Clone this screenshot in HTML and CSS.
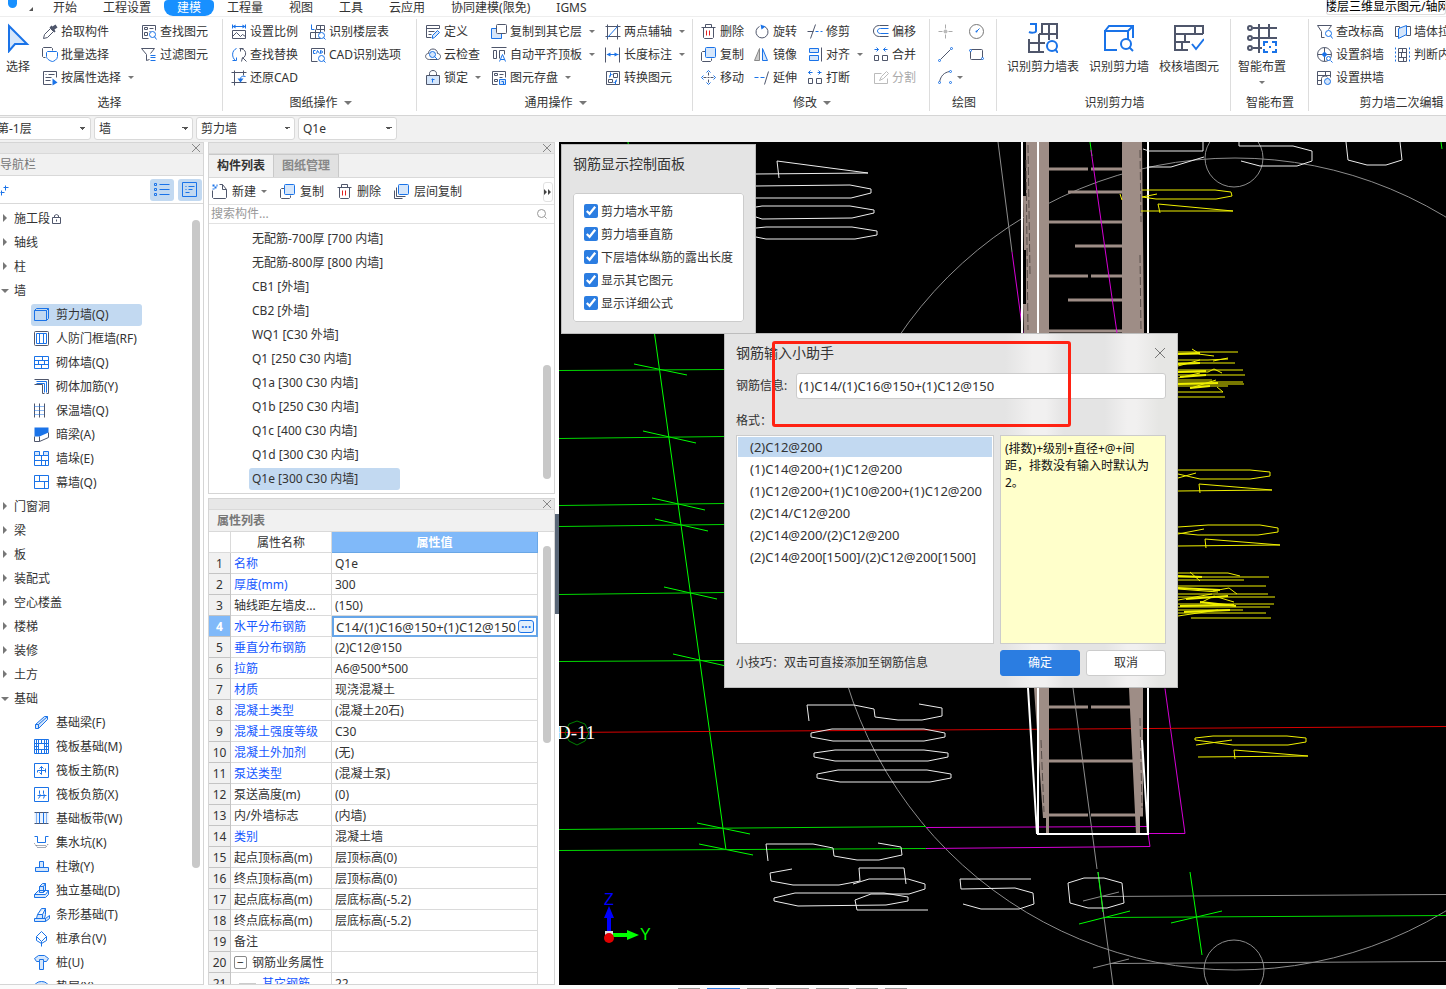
FILE: index.html
```html
<!DOCTYPE html>
<html lang="zh-CN">
<head>
    <meta charset="utf-8">
    <title>建模</title>
    <link rel="stylesheet" href="styles.css">
</head>
<body>
    <!-- 图标库 -->
    <svg class="icon-lib" aria-hidden="true">
        <symbol id="i-cursor" viewBox="0 0 30 30"><path d="M6 3v25l6-7h12z" fill="#d5e6fb" stroke="#1a73e8" stroke-width="2"/></symbol>
        <symbol id="i-pick" viewBox="-.5 -.5 16 16"><path class="d" d="M1 14l1-4 6-6 3 3-6 6z"/><path d="M7 3l5 5 1-1-1-2 3-2-2-3-3 2-1-1z" fill="#4f566b"/></symbol>
        <symbol id="i-batch" viewBox="-.5 -.5 16 16"><path class="d" d="M3 10H1L0 9V1l1-1h8l1 1v2"/><path class="b" d="M4 5l1-1h9l1 1v4c0 3-4 5-5 5s-6-2-6-5z"/></symbol>
        <symbol id="i-attr" viewBox="-.5 -.5 16 16"><path class="d" d="M9 14H1V1h13v6M3 4h1M6 4h6M3 7h6M3 10h5"/><path class="bf" d="M10 8v7l5-3z"/></symbol>
        <symbol id="i-find" viewBox="-.5 -.5 16 16"><path class="d" d="M7 14H1V1h13v5M3 3h3v2H3zM8 4h4M3 8h3v3H3zM8 7h1"/><circle class="b" cx="11" cy="10" r="3"/><path class="b" d="M13 12l2 3"/></symbol>
        <symbol id="i-filter" viewBox="-.5 -.5 16 16"><path class="d" d="M8 12l-3 1V7L0 1h13L9 6"/><path class="b" d="M9 8h5M9 10h5M9 13h5"/></symbol>
        <symbol id="i-scale" viewBox="-.5 -.5 16 16"><path class="b" d="M1 0v4M14 0v4M1 2h13"/><path class="bf" d="M1 2l3-2v4zM14 2l-3-2v4z"/><path class="d" d="M1 6h13v8H1zM1 12l4-4 4 4 2-2 3 2"/></symbol>
        <symbol id="i-replace" viewBox="-.5 -.5 16 16"><path class="b" d="M5 1C0 3 0 10 4 13M1 13h4v-3"/><path class="d" d="M8 1c7 0 8 7 3 10M9 4V1h3M10 14l1-4 4 4"/></symbol>
        <symbol id="i-restore" viewBox="-.5 -.5 16 16"><path class="d" d="M3 0v15M12 0v5M0 2h15M0 12h15"/><path class="b" d="M14 6c-5-1-5 1-5 4"/><path class="bf" d="M6 8h6l-3 4z"/></symbol>
        <symbol id="i-floor" viewBox="-.5 -.5 16 16"><path class="b" d="M1 0v5h3"/><path class="d" d="M6 5V1h8v6M6 5h8M10 1v13M0 14V8h10M5 5v9M0 14h10"/><circle class="bw" cx="11" cy="11" r="3"/><path class="b" d="M13 13l2 2"/></symbol>
        <symbol id="i-cad" viewBox="-.5 -.5 16 16"><path class="d" d="M7 14H1V1h13v6"/><path class="b" d="M5 3H3v3h2M6 6l1-3 2 3M10 3v3l2-1V4z"/><circle class="b" cx="11" cy="11" r="3"/><path class="b" d="M13 13l2 2"/></symbol>
        <symbol id="i-define" viewBox="-.5 -.5 16 16"><path class="d" d="M6 13H1V1h13v3M1 4h13M3 7h6M3 10h3"/><path class="bl" d="M7 14v-3l5-5 2 2-5 5z"/></symbol>
        <symbol id="i-cloud" viewBox="-.5 -.5 16 16"><path class="d" d="M4 12c-5 0-5-6-1-6 0-6 9-6 9 0 4 0 4 6 0 6z"/><circle class="bl" cx="7" cy="7" r="3"/><path class="b" d="M9 9l3 3"/></symbol>
        <symbol id="i-lock" viewBox="-.5 -.5 16 16"><path class="d" d="M4 5V3c0-4 7-4 7 0v2"/><path d="M1 5h13v9H1z" fill="#d5e6fb" stroke="#4f566b"/><path class="b" d="M7 8v4M6 9h3"/></symbol>
        <symbol id="i-copyto" viewBox="-.5 -.5 16 16"><path class="bl" d="M0 4h10v10H0z"/><rect x="5" y="0" width="10" height="9" rx="1" fill="#fff" stroke="#4f566b"/></symbol>
        <symbol id="i-align-top" viewBox="-.5 -.5 16 16"><path class="d" d="M0 0h15M2 3h3v8H2zM8 11V3h5v4"/><path class="b" d="M8 14l3-7 3 7M9 12h4"/></symbol>
        <symbol id="i-save" viewBox="-.5 -.5 16 16"><path class="d" d="M6 14H1V1h13v6M3 3h3v2H3zM8 4h4M3 9h3v2H3zM8 7h3"/><path class="bl" d="M8 9h6v5H8zM10 11h2v3"/></symbol>
        <symbol id="i-axis" viewBox="-.5 -.5 16 16"><path class="d" d="M2 0v15M12 0v15M0 2h15M0 12h15"/><path class="b" d="M2 13L12 2"/></symbol>
        <symbol id="i-length" viewBox="-.5 -.5 16 16"><path class="d" d="M0 0v15M14 0v15"/><path class="b" d="M2 7h11"/><path class="bf" d="M1 7l4-2v4zM13 7l-4-2v4z"/></symbol>
        <symbol id="i-convert" viewBox="-.5 -.5 16 16"><path class="d" d="M1 1h13v13H1zM8 3h4v4H8zM3 9h4v3H3z"/><path class="b" d="M4 7c0-3 1-3 3-3M11 9c0 3-1 3-3 3M5 2v4M10 10v4"/></symbol>
        <symbol id="i-del" viewBox="-.5 -.5 16 16"><path class="d" d="M0 3h14M4 3V0h6v3M2 3v10l1 1h8l1-1V3"/><path d="M5 6v5M8 6v5" stroke="#e02020" fill="none"/></symbol>
        <symbol id="i-copy" viewBox="-.5 -.5 16 16"><path class="d" d="M4 4H1L0 5v8l1 1h8l1-1v-2"/><rect class="bl" x="4" y="0" width="10" height="10" rx="1"/></symbol>
        <symbol id="i-copy2" viewBox="-.5 -.5 16 16"><path class="d" d="M2 3v9h9M0 6v8h8"/><rect class="bl" x="4" y="0" width="10" height="10" rx="1"/></symbol>
        <symbol id="i-move" viewBox="-.5 -.5 16 16"><path class="b" d="M5 2l2-2 2 2M5 12l2 2 2-2M2 5L0 7l2 2M12 5l2 2-2 2"/><path class="d" d="M7 2v3M7 9v3M2 7h3M9 7h3M6 7h2"/></symbol>
        <symbol id="i-rotate" viewBox="-.5 -.5 16 16"><path class="d" d="M10 2a6 6 0 1 1-5 0"/><path class="bf" d="M6 0l5 2-4 3z"/></symbol>
        <symbol id="i-mirror" viewBox="-.5 -.5 16 16"><path d="M5 1v12H0z" fill="#ccc" stroke="#888"/><path class="bl" d="M8 1v12h5z"/></symbol>
        <symbol id="i-extend" viewBox="-.5 -.5 16 16"><path class="b" d="M0 7h4M6 7h4"/><path class="d" d="M10 14l4-13"/></symbol>
        <symbol id="i-trim" viewBox="-.5 -.5 16 16"><path class="d" d="M3 14L8 0M0 7h6"/><path class="b" d="M8 7h3M13 7h2"/></symbol>
        <symbol id="i-align" viewBox="-.5 -.5 16 16"><path class="bl" d="M2 1h9v4H2zM2 8h9v5H2z"/><path class="d" d="M14 0v14"/></symbol>
        <symbol id="i-break" viewBox="-.5 -.5 16 16"><path class="d" d="M1 8h4v5H1zM9 8h5v5H9z"/><path class="b" d="M3 0L1 2l2 2M11 0l2 2-2 2M1 2h4M10 2h4"/></symbol>
        <symbol id="i-merge" viewBox="-.5 -.5 16 16"><path class="d" d="M1 8h4v5H1zM9 8h5v5H9z"/><path class="b" d="M3 0l2 2-2 2M12 0l-2 2 2 2M1 2h4M10 2h4"/></symbol>
        <symbol id="i-offset" viewBox="-.5 -.5 16 16"><path class="d" d="M15 1H6C-2 1-2 12 6 12h9"/><path class="b" d="M15 4H7C3 4 3 9 7 9h8"/></symbol>
        <symbol id="i-split" viewBox="-.5 -.5 16 16"><path d="M8 3H1v10h13V8M6 10l2-4 5-5 2 2-5 5z" fill="none" stroke="#bbb"/></symbol>
        <symbol id="i-point" viewBox="-.5 -.5 16 16"><path d="M7 0v4M7 10v4M0 7h4M10 7h4" stroke="#aaa"/><circle cx="7" cy="7" r="2" fill="#bbb"/></symbol>
        <symbol id="i-line" viewBox="-.5 -.5 16 16"><path class="d" d="M2 12L12 2"/><circle class="bw" cx="1" cy="13" r="1"/><circle class="bw" cx="13" cy="1" r="1"/></symbol>
        <symbol id="i-arc" viewBox="-.5 -.5 16 16"><path class="d" d="M1 12C2 5 6 2 11 1"/><circle class="bw" cx="1" cy="12" r="1"/><circle class="bw" cx="12" cy="1" r="1"/><circle class="bw" cx="12" cy="12" r="1"/></symbol>
        <symbol id="i-circle" viewBox="-.5 -.5 16 16"><circle cx="7" cy="7" r="7" fill="none" stroke="#777"/><path class="b" d="M7 7l3-3"/><circle class="bf" cx="7" cy="7" r="1"/></symbol>
        <symbol id="i-rect" viewBox="-.5 -.5 16 16"><rect class="d" x="1" y="2" width="12" height="10" rx="1"/><circle class="bw" cx="1" cy="3" r="1"/><circle class="bw" cx="13" cy="11" r="1"/></symbol>
        <symbol id="i-walltable" viewBox="0 0 30 30"><path class="b2" d="M2 1h6v7c0 2-5 2-7 1"/><path class="d2" d="M14 11V1h15v15M14 11h15M21 1v16M11 11h3M11 11v18M1 16v13h15M1 20h16"/><circle class="b2" cx="24" cy="23" r="5"/><path class="b2" d="M27 26l3 4"/></symbol>
        <symbol id="i-wallfind" viewBox="0 0 30 30"><path class="b2" d="M13 27H1V8h23v8M1 8l4-5h24v12M24 8l5-5"/><circle class="b2" cx="22" cy="21" r="5"/><path class="b2" d="M25 24l4 4"/></symbol>
        <symbol id="i-wallcheck" viewBox="0 0 30 30"><path class="d2" d="M14 27H1V3h28v8M1 11h28M21 3v8M11 11v8M1 19h15M8 19v8"/><path class="b2" d="M18 21l4 5 8-10"/></symbol>
        <symbol id="i-smart" viewBox="0 0 30 30"><path class="d2" d="M12 1v29M22 1v14M6 5h24M6 15h24M6 25h9"/><circle class="d2" cx="3" cy="5" r="2"/><circle class="d2" cx="3" cy="15" r="2"/><circle class="d2" cx="3" cy="25" r="2"/><path class="b2" d="M17 23v-4h4M25 19h4v4M29 26v3h-4M21 29h-4v-3M22 24h2"/></symbol>
        <symbol id="i-elev" viewBox="-.5 -.5 16 16"><path class="d" d="M7 13H4V7L0 1h14l-3 4"/><circle class="b" cx="11" cy="9" r="3"/><path class="b" d="M13 11l2 3"/></symbol>
        <symbol id="i-slope" viewBox="-.5 -.5 16 16"><circle class="d" cx="7" cy="7" r="7"/><path class="d" d="M7 0v14M0 7h14"/><path class="bf" d="M4 7l3-3 3 3-3 3z"/><circle class="bw" cx="11" cy="11" r="2"/><path class="b" d="M13 13l2 2"/></symbol>
        <symbol id="i-arch" viewBox="-.5 -.5 16 16"><path class="d" d="M0 14V1h13v6M0 5h13M4 14V8c0-3 6-3 6-1M0 10h4M8 1v4M0 14h4"/><circle class="bl" cx="10" cy="11" r="3"/></symbol>
        <symbol id="i-pull" viewBox="-.5 -.5 16 16"><path class="d" d="M0 2h4v10H0zM11 2h4v9h-4z"/><path class="bl" d="M3 4l8-3v9l-8 4z"/></symbol>
        <symbol id="i-judge" viewBox="-.5 -.5 16 16"><path class="d" d="M3 1h8v13H3zM3 5h8M3 10h8M7 1v4M6 5v5M8 10v4"/><path class="b" stroke-dasharray="2" d="M0 0v15M14 0v15"/></symbol>
        <symbol id="i-new" viewBox="-.5 -.5 16 16"><path class="d" d="M0 6v7l1 1h12l1-1V5l-4-5H7M10 0v5h4"/><path class="bf" d="M0 0h2v2H0zM2 2h2v2H2zM4 0h1v2H4zM0 4h2v1H0z"/></symbol>
        <symbol id="i-search" viewBox="-.5 -.5 16 16"><circle cx="7" cy="7" r="4" fill="none" stroke="#999"/><path d="M10 10l2 2" stroke="#999"/></symbol>

        <symbol id="n-wall" viewBox="-.5 -.5 16 16"><path class="b" d="M0 3h12v10H0zM0 3l2-2h12v10l-2 2M12 3l2-2"/></symbol>
        <symbol id="n-door" viewBox="-.5 -.5 16 16"><rect class="d" x="0" y="0" width="14" height="14" rx="1"/><path class="b" d="M2 2h10v10H2zM5 2v10M9 2v10"/></symbol>
        <symbol id="n-brick" viewBox="-.5 -.5 16 16"><path class="b" d="M0 1h14v12H0zM0 5h14M0 9h14M8 1v4M4 5v4M10 5v4M7 9v4"/></symbol>
        <symbol id="n-rebar" viewBox="-.5 -.5 16 16"><path class="d" d="M0 0h14v14M0 5h8v9M12 14h2M8 14h2"/><path class="b" d="M2 2h10v11M2 4h8v9"/></symbol>
        <symbol id="n-insul" viewBox="-.5 -.5 16 16"><path class="d" d="M0 0v14M5 0v14M10 0v14"/><path class="b" stroke-dasharray="1 1" d="M0 3h10M0 7h10M0 11h10"/></symbol>
        <symbol id="n-dark" viewBox="-.5 -.5 16 16"><path class="bf" d="M0 0h14v5l-9 4H0z"/><path class="d" d="M0 9v5h5l9-4V5M5 9v5"/></symbol>
        <symbol id="n-pier" viewBox="-.5 -.5 16 16"><path class="b" d="M0 4h14v10H0zM0 9h14M7 4v10M11 9v5"/><path class="bl" d="M0 0h5v4H0zM9 0h5v4H9z"/></symbol>
        <symbol id="n-curtain" viewBox="-.5 -.5 16 16"><path class="b" d="M0 0h14v13H0zM0 6h14M5 0v6M10 6v7"/></symbol>
        <symbol id="n-beam" viewBox="-.5 -.5 16 16"><path class="bl" d="M1 9l9-8h3v3l-9 9H1zM1 9h3v4M4 9l9-8"/></symbol>
        <symbol id="n-raft" viewBox="-.5 -.5 16 16"><path class="b" d="M0 0h14v14H0zM0 4h14M0 10h14M4 0v14M10 0v14M7 0v4M7 10v4M0 7h4M10 7h4M2 0v14M12 0v14"/></symbol>
        <symbol id="n-main" viewBox="-.5 -.5 16 16"><path class="b" d="M0 0h14v14H0zM3 7h8M7 3v8M5 5l2-2 2 2M5 9l2 2M11 5v4M3 7v2"/></symbol>
        <symbol id="n-neg" viewBox="-.5 -.5 16 16"><path class="b" d="M0 0h14v14H0zM3 8h9M5 3v3l1 2-2 3M9 3v3l1 2-1 3"/></symbol>
        <symbol id="n-band" viewBox="-.5 -.5 16 16"><path d="M0 1h14v10H0z" fill="#e8f1fd"/><path class="d" d="M0 1h14M0 12h14"/><path class="b" d="M5 1v11M9 1v11"/><path class="b" stroke-dasharray="1 1" d="M2 1v11M12 1v11"/></symbol>
        <symbol id="n-pit" viewBox="-.5 -.5 16 16"><path class="b" d="M0 1h3v6h8V1h3"/><path class="d" stroke-dasharray="1 1" d="M0 8l3 4h8l3-4M2 10h10"/></symbol>
        <symbol id="n-pedestal" viewBox="-.5 -.5 16 16"><path class="bl" d="M5 2h4v6H5zM1 8h13v4H1z"/></symbol>
        <symbol id="n-iso" viewBox="-.5 -.5 16 16"><path class="bl" d="M0 11l4-4h10l-3 4zM0 11v3h11l3-3V7M5 9V3l3-3h3v7l-2 2zM5 3h4v6M9 3l2-3"/></symbol>
        <symbol id="n-strip" viewBox="-.5 -.5 16 16"><path class="bl" d="M0 11h11v3H0zM11 11l4-3v3l-4 3M2 11l1-4 4-6h4v6l-1 4M3 7h5l3-6M8 7v4"/></symbol>
        <symbol id="n-cap" viewBox="-.5 -.5 16 16"><path class="b" d="M2 5l5-5 5 5-5 5zM2 5v4l5 3 5-3V5M7 10v5"/></symbol>
        <symbol id="n-pile" viewBox="-.5 -.5 16 16"><path class="bl" d="M0 3l4-3h6l4 3-2 3H9v8H5V6H2zM5 6V4h4v2"/></symbol>
        <symbol id="n-pad" viewBox="-.5 -.5 16 16"><ellipse class="bl" cx="7" cy="7" rx="7" ry="5"/></symbol>
    </svg>

    <header class="menubar">
        <span class="logo"></span><span class="logo-arrow"></span>
        <nav class="tabs">
            <a href="#">开始</a>
            <a href="#">工程设置</a>
            <a href="#" class="active">建模</a>
            <a href="#">工程量</a>
            <a href="#">视图</a>
            <a href="#">工具</a>
            <a href="#">云应用</a>
            <a href="#">协同建模(限免)</a>
            <a href="#">IGMS</a>
        </nav>
        <div class="tooltip">楼层三维显示图元/轴网</div>
    </header>

    <div class="ribbon">
        <section class="group g-select">
            <div class="tools">
                <button class="big"><svg><use href="#i-cursor"/></svg>选择</button>
                <div class="col">
                    <button><svg><use href="#i-pick"/></svg>拾取构件</button>
                    <button><svg><use href="#i-batch"/></svg>批量选择</button>
                    <button><svg><use href="#i-attr"/></svg>按属性选择<i class="arrow"></i></button>
                </div>
                <div class="col">
                    <button><svg><use href="#i-find"/></svg>查找图元</button>
                    <button><svg><use href="#i-filter"/></svg>过滤图元</button>
                </div>
            </div>
            <div class="group-name">选择</div>
        </section>
        <section class="group g-drawing">
            <div class="tools">
                <div class="col">
                    <button><svg><use href="#i-scale"/></svg>设置比例</button>
                    <button><svg><use href="#i-replace"/></svg>查找替换</button>
                    <button><svg><use href="#i-restore"/></svg>还原CAD</button>
                </div>
                <div class="col">
                    <button><svg><use href="#i-floor"/></svg>识别楼层表</button>
                    <button><svg><use href="#i-cad"/></svg>CAD识别选项</button>
                </div>
            </div>
            <div class="group-name">图纸操作<i class="arrow wide"></i></div>
        </section>
        <section class="group g-common">
            <div class="tools">
                <div class="col">
                    <button><svg><use href="#i-define"/></svg>定义</button>
                    <button><svg><use href="#i-cloud"/></svg>云检查</button>
                    <button><svg><use href="#i-lock"/></svg>锁定<i class="arrow"></i></button>
                </div>
                <div class="col">
                    <button><svg><use href="#i-copyto"/></svg>复制到其它层<i class="arrow"></i></button>
                    <button><svg><use href="#i-align-top"/></svg>自动平齐顶板<i class="arrow"></i></button>
                    <button><svg><use href="#i-save"/></svg>图元存盘<i class="arrow"></i></button>
                </div>
                <div class="col">
                    <button><svg><use href="#i-axis"/></svg>两点辅轴<i class="arrow"></i></button>
                    <button><svg><use href="#i-length"/></svg>长度标注<i class="arrow"></i></button>
                    <button><svg><use href="#i-convert"/></svg>转换图元</button>
                </div>
            </div>
            <div class="group-name">通用操作<i class="arrow wide"></i></div>
        </section>
        <section class="group g-modify">
            <div class="tools">
                <div class="col">
                    <button><svg><use href="#i-del"/></svg>删除</button>
                    <button><svg><use href="#i-copy"/></svg>复制</button>
                    <button><svg><use href="#i-move"/></svg>移动</button>
                </div>
                <div class="col">
                    <button><svg><use href="#i-rotate"/></svg>旋转</button>
                    <button><svg><use href="#i-mirror"/></svg>镜像</button>
                    <button><svg><use href="#i-extend"/></svg>延伸</button>
                </div>
                <div class="col">
                    <button><svg><use href="#i-trim"/></svg>修剪</button>
                    <button><svg><use href="#i-align"/></svg>对齐<i class="arrow"></i></button>
                    <button><svg><use href="#i-break"/></svg>打断</button>
                </div>
                <div class="col">
                    <button><svg><use href="#i-offset"/></svg>偏移</button>
                    <button><svg><use href="#i-merge"/></svg>合并</button>
                    <button disabled><svg><use href="#i-split"/></svg>分割</button>
                </div>
            </div>
            <div class="group-name">修改<i class="arrow wide"></i></div>
        </section>
        <section class="group g-draw">
            <div class="tools">
                <div class="col">
                    <button aria-label="点"><svg><use href="#i-point"/></svg></button>
                    <button aria-label="直线"><svg><use href="#i-line"/></svg></button>
                    <button aria-label="弧"><svg><use href="#i-arc"/></svg><i class="arrow near"></i></button>
                </div>
                <div class="col">
                    <button aria-label="圆"><svg><use href="#i-circle"/></svg></button>
                    <button aria-label="矩形"><svg><use href="#i-rect"/></svg></button>
                </div>
            </div>
            <div class="group-name">绘图</div>
        </section>
        <section class="group g-identify">
            <div class="tools">
                <button class="big"><svg><use href="#i-walltable"/></svg>识别剪力墙表</button>
                <button class="big"><svg><use href="#i-wallfind"/></svg>识别剪力墙</button>
                <button class="big"><svg><use href="#i-wallcheck"/></svg>校核墙图元</button>
            </div>
            <div class="group-name">识别剪力墙</div>
        </section>
        <section class="group g-smart">
            <div class="tools">
                <button class="big"><svg><use href="#i-smart"/></svg>智能布置<i class="arrow"></i></button>
            </div>
            <div class="group-name">智能布置</div>
        </section>
        <section class="group g-edit">
            <div class="tools">
                <div class="col">
                    <button><svg><use href="#i-elev"/></svg>查改标高</button>
                    <button><svg><use href="#i-slope"/></svg>设置斜墙</button>
                    <button><svg><use href="#i-arch"/></svg>设置拱墙</button>
                </div>
                <div class="col">
                    <button><svg><use href="#i-pull"/></svg>墙体拉伸</button>
                    <button><svg><use href="#i-judge"/></svg>判断内外墙</button>
                </div>
            </div>
            <div class="group-name">剪力墙二次编辑</div>
        </section>
    </div>

    <div class="combos">
        <select aria-label="楼层"><option>第-1层</option></select>
        <select aria-label="类别"><option>墙</option></select>
        <select aria-label="构件类型"><option>剪力墙</option></select>
        <select aria-label="构件"><option>Q1e</option></select>
    </div>

    <main class="workspace">
        <aside class="panel nav-panel">
            <div class="grip"><button class="close" aria-label="关闭"><svg viewBox="0 0 8 8"><path d="M0 0l8 8M8 0L0 8"/></svg></button></div>
            <div class="panel-title nav-title">导航栏</div>
            <div class="nav-tools">
                <svg class="plus" viewBox="-.5 -.5 10 12"><path class="b" d="M0 8h4M1 6v5M3 3h5M5 1v5"/></svg>
                <button aria-label="列表"><svg viewBox="-.5 -.5 16 16"><path class="b" d="M5 2h10M5 7h10M5 12h10M0 1h2v2H0zM0 6h2v2H0zM0 11h2v2H0z"/></svg></button>
                <button aria-label="详情"><svg viewBox="-.5 -.5 16 16"><path class="b" d="M0 0h14v14H0zM3 4h1M6 4h6M3 7h1M6 7h4M3 10h4"/></svg></button>
            </div>
            <div class="nav-body">
                <ul class="tree">
                    <li><a href="#" class="closed">施工段<svg class="tiny" viewBox="-.5 -.5 10 12"><path class="d" d="M0 4h8v6H0zM2 4V2l2-1 2 1v2M4 6v2"/></svg></a></li>
                    <li><a href="#" class="closed">轴线</a></li>
                    <li><a href="#" class="closed">柱</a></li>
                    <li><a href="#" class="open">墙</a>
                        <ul>
                            <li><a href="#" class="selected"><svg><use href="#n-wall"/></svg>剪力墙(Q)</a></li>
                            <li><a href="#"><svg><use href="#n-door"/></svg>人防门框墙(RF)</a></li>
                            <li><a href="#"><svg><use href="#n-brick"/></svg>砌体墙(Q)</a></li>
                            <li><a href="#"><svg><use href="#n-rebar"/></svg>砌体加筋(Y)</a></li>
                            <li><a href="#"><svg><use href="#n-insul"/></svg>保温墙(Q)</a></li>
                            <li><a href="#"><svg><use href="#n-dark"/></svg>暗梁(A)</a></li>
                            <li><a href="#"><svg><use href="#n-pier"/></svg>墙垛(E)</a></li>
                            <li><a href="#"><svg><use href="#n-curtain"/></svg>幕墙(Q)</a></li>
                        </ul>
                    </li>
                    <li><a href="#" class="closed">门窗洞</a></li>
                    <li><a href="#" class="closed">梁</a></li>
                    <li><a href="#" class="closed">板</a></li>
                    <li><a href="#" class="closed">装配式</a></li>
                    <li><a href="#" class="closed">空心楼盖</a></li>
                    <li><a href="#" class="closed">楼梯</a></li>
                    <li><a href="#" class="closed">装修</a></li>
                    <li><a href="#" class="closed">土方</a></li>
                    <li><a href="#" class="open">基础</a>
                        <ul>
                            <li><a href="#"><svg><use href="#n-beam"/></svg>基础梁(F)</a></li>
                            <li><a href="#"><svg><use href="#n-raft"/></svg>筏板基础(M)</a></li>
                            <li><a href="#"><svg><use href="#n-main"/></svg>筏板主筋(R)</a></li>
                            <li><a href="#"><svg><use href="#n-neg"/></svg>筏板负筋(X)</a></li>
                            <li><a href="#"><svg><use href="#n-band"/></svg>基础板带(W)</a></li>
                            <li><a href="#"><svg><use href="#n-pit"/></svg>集水坑(K)</a></li>
                            <li><a href="#"><svg><use href="#n-pedestal"/></svg>柱墩(Y)</a></li>
                            <li><a href="#"><svg><use href="#n-iso"/></svg>独立基础(D)</a></li>
                            <li><a href="#"><svg><use href="#n-strip"/></svg>条形基础(T)</a></li>
                            <li><a href="#"><svg><use href="#n-cap"/></svg>桩承台(V)</a></li>
                            <li><a href="#"><svg><use href="#n-pile"/></svg>桩(U)</a></li>
                            <li><a href="#"><svg><use href="#n-pad"/></svg>垫层(X)</a></li>
                        </ul>
                    </li>
                </ul>
                <span class="thumb"></span>
            </div>
        </aside>

        <div class="middle">
            <section class="panel list-panel">
                <div class="grip"><button class="close" aria-label="关闭"><svg viewBox="0 0 8 8"><path d="M0 0l8 8M8 0L0 8"/></svg></button></div>
                <div class="panel-tabs">
                    <button class="active">构件列表</button>
                    <button>图纸管理</button>
                </div>
                <div class="list-tools">
                    <button><svg><use href="#i-new"/></svg>新建<i class="arrow"></i></button>
                    <button><svg><use href="#i-copy"/></svg>复制</button>
                    <button><svg><use href="#i-del"/></svg>删除</button>
                    <button><svg><use href="#i-copy2"/></svg>层间复制</button>
                    <button class="more" aria-label="更多"><svg viewBox="0 0 8 6"><path d="M0 0v6l3-3zM4 0v6l3-3z" fill="#444"/></svg></button>
                </div>
                <div class="search">
                    <input type="text" placeholder="搜索构件..." aria-label="搜索构件">
                    <svg><use href="#i-search"/></svg>
                </div>
                <div class="list-body">
                    <ul>
                        <li>无配筋-700厚 [700 内墙]</li>
                        <li>无配筋-800厚 [800 内墙]</li>
                        <li>CB1 [外墙]</li>
                        <li>CB2 [外墙]</li>
                        <li>WQ1 [C30 外墙]</li>
                        <li>Q1 [250 C30 内墙]</li>
                        <li>Q1a [300 C30 内墙]</li>
                        <li>Q1b [250 C30 内墙]</li>
                        <li>Q1c [400 C30 内墙]</li>
                        <li>Q1d [300 C30 内墙]</li>
                        <li class="selected">Q1e [300 C30 内墙]</li>
                    </ul>
                    <span class="thumb"></span>
                </div>
            </section>

            <section class="panel prop-panel">
                <div class="grip"><button class="close" aria-label="关闭"><svg viewBox="0 0 8 8"><path d="M0 0l8 8M8 0L0 8"/></svg></button></div>
                <div class="panel-title"><b>属性列表</b></div>
                <div class="prop-body">
                    <table>
                        <thead><tr><th class="no"></th><th class="name">属性名称</th><th class="value">属性值</th></tr></thead>
                        <tbody>
                            <tr><td>1</td><td class="link">名称</td><td>Q1e</td></tr>
                            <tr><td>2</td><td class="link">厚度(mm)</td><td>300</td></tr>
                            <tr><td>3</td><td>轴线距左墙皮...</td><td>(150)</td></tr>
                            <tr class="editing"><td>4</td><td class="link">水平分布钢筋</td><td><div class="edit"><input class="rebar" type="text" value="C14/(1)C16@150+(1)C12@150" aria-label="水平分布钢筋"><button aria-label="更多">···</button></div></td></tr>
                            <tr><td>5</td><td class="link">垂直分布钢筋</td><td>(2)C12@150</td></tr>
                            <tr><td>6</td><td class="link">拉筋</td><td>A6@500*500</td></tr>
                            <tr><td>7</td><td class="link">材质</td><td>现浇混凝土</td></tr>
                            <tr><td>8</td><td class="link">混凝土类型</td><td>(混凝土20石)</td></tr>
                            <tr><td>9</td><td class="link">混凝土强度等级</td><td>C30</td></tr>
                            <tr><td>10</td><td class="link">混凝土外加剂</td><td>(无)</td></tr>
                            <tr><td>11</td><td class="link">泵送类型</td><td>(混凝土泵)</td></tr>
                            <tr><td>12</td><td>泵送高度(m)</td><td>(0)</td></tr>
                            <tr><td>13</td><td>内/外墙标志</td><td>(内墙)</td></tr>
                            <tr><td>14</td><td class="link">类别</td><td>混凝土墙</td></tr>
                            <tr><td>15</td><td>起点顶标高(m)</td><td>层顶标高(0)</td></tr>
                            <tr><td>16</td><td>终点顶标高(m)</td><td>层顶标高(0)</td></tr>
                            <tr><td>17</td><td>起点底标高(m)</td><td>层底标高(-5.2)</td></tr>
                            <tr><td>18</td><td>终点底标高(m)</td><td>层底标高(-5.2)</td></tr>
                            <tr><td>19</td><td>备注</td><td></td></tr>
                            <tr><td>20</td><td><button class="fold" aria-label="折叠">−</button>钢筋业务属性</td><td></td></tr>
                            <tr><td>21</td><td class="link child">其它钢筋</td><td>22</td></tr>
                        </tbody>
                    </table>
                    <span class="thumb"></span>
                </div>
            </section>
        </div>

        <div class="splitter"><button aria-label="收起"></button></div>

        <section class="viewport">
            <!-- 三维视图 -->
            <svg class="scene" viewBox="559 142 887 843" preserveAspectRatio="xMinYMin slice" fill="none">
                <g stroke="#8c8c8c">
                    <circle cx="1235" cy="564" r="406"/>
                    <circle cx="1234" cy="158" r="29"/>
                    <circle cx="1234" cy="970" r="30"/>
                    <path d="M998 142l14 110M1073 688l24 181M1098 872l15 113M1103 896.5l343-2M1083 901l36-9M1110 963.5l336-2M1093 968l36-9"/>
                </g>
                <g stroke="#0f0">
                    <path d="M628 142l98 708M1090 142l2 14M1098 872l5 40M1441 142l1 7"/>
                    <path d="M634 364l53 11M643 431l53 12M652 498l53 12M655 519l53 12M664 587l53 12M673 654l53 12M697 823l53 11M699 844l54 11"/>
                    <path d="M1190 872l12 83M1079 924l51-13M1171 923l51-12"/>
                </g>
                <path stroke="#00d800" d="M559 370.5l166-1M559 438.5l166-2M559 505.5l166-2M559 526.5l166-2M559 594.5l166-2M559 661.5l166-1M559 829.5l367-3M559 850.5l367-2M1105 917.5l341-2"/>
                <path stroke="#d400d4" d="M926 827.5l221-1M926 848.5l224-2-2-13h37l-20-145M1012 252l11 81"/>
                <path stroke="#d80000" d="M559 732.5l887-6"/>
                <!-- 墙体 -->
                <g fill="#9e8d86">
                    <path d="M1026 142h23v191h-23zM1122 142h20l2 191h-22zM1023 196h4v54h-3zM1023 304h3v29h-2z"/>
                    <path d="M1034 688h15v146h-3v-16h-3zM1129 688h14v127h-3v19h-4z"/>
                </g>
                <path stroke="#9e8d86" stroke-width="3" d="M1049 169h39M1091 169h31M1068 192h54M1049 222h73M1075 246h47M1049 276h39M1091 276h31M1068 300h54M1049 331h73M1049 707h39M1091 707h40M1049 761h85M1043 815h45M1091 815h52"/>
                <path stroke="#574d49" stroke-dasharray="8 3" d="M1028 145l2 130M1026 160l2 170M1140 150l1 72M1140 255l1 75M1140 718l2 90M1041 740l3 72"/>
                <path stroke="#fff" stroke-width="2" d="M1022 142v191M1038 142v191M1148 142v191M1028 688l9 146M1038 688v146h110V688M1142 740l6 94"/>
                <path stroke="#d400d4" d="M1091 150l26 183"/>
                <!-- 钢筋公式 -->
                <path stroke="#ececec" d="M756 174l112-1-91-12 2 17M756 186l94-1 21 4v4l-20 5h-95M756 207l6-1h88l24 4v3l-22 5-90 1-6-2M756 228l10-1h86l25 4v4l-22 4h-89l-10-2
                    M809 721l-2-16h47l20 4 1 8 23 3h24l20-4v-8l-23-4M811 733l21-4h92l21 4v4l-21 4h-91l-22-4zM814 753l21-3h89l24 3v4l-20 4h-93l-21-4zM817 774l21-4h89l24 4v4l-21 4h-90l-23-4z
                    M768 861l-2-17h47l20 4 1 8 23 4h22l23-5-1-8-23-4M792 869l-22 4 1 8 22 4h46l21-4-1-13h45l2 16M853 884l16-5h39l17 5v5l-16 5h-38l-16 6 2 10h71M774 898l21-5h89l24 4v4l-22 4-88 1-24-5z
                    M1031 879h-71l1 10 54-1 18 5 1 11-15 5h-38l-18-5M1068 883l16-5h20l18 5 2 20-17 5h-19l-18-5z
                    M1143 149l6 2h54v-9M1204 157l-33 10h-22M1239 142v4h54l19 5v10l-15 5h-37l-19-5M1346 142l2 18 19 5h19l16-5-2-18"/>
                <g stroke="#f0f000">
                    <path d="M1142 190h73l16 2 1 4-16 3h-60l-14-2 15-3M1120 194l2 6M1141 211h92l-75-7 2 9"/>
                    <path d="M1178 470h72l20 2v4l-20 3h-50l-22-5M1178 478l18-5M1178 491l94-1-73-6 1 9"/>
                    <path d="M1178 527l30-2h52l18 3v4l-20 3h-60l-20-2M1178 534l26-5M1178 546l102-1-75-6 1 9"/>
                    <path d="M1195 738l18-2h74l19 2v4l-18 3h-55l-38-5zM1196 745l36-5M1198 757l110-1-74-6 1 9"/>
                    <path d="M1178 352h60M1178 354h20l16 2M1192 349l8 5M1178 360h30l20-1M1178 363h57M1178 366l22-6M1178 370h65M1178 372h30l6-3 8 4M1178 375h67M1178 378l22-5M1178 382h65M1178 384h66M1178 386h50M1191 388l25-8M1178 380h34M1178 392h45l-6-5M1178 397h47M1213 361l15-3"/>
                    <path d="M1178 573h50l12 3M1178 577h91M1178 580h66M1190 572l10 9M1178 586h88M1178 589l40 3M1178 594h90M1178 597h97M1178 600l34-6M1178 604h96M1178 607h92M1178 610h65M1178 613h88M1178 616l40-6M1191 618h80M1213 591l16-3 8 6M1200 603l14-7 20 6"/>
                    <path stroke-width="2" d="M1178 354l22-1M1178 372l28-1M1180 377l26-2M1178 384l40-1M1178 364l22-1M1190 388l20-2M1178 576l24 1M1178 588l42 2M1186 599l42-3M1180 606l54-1M1184 612l46-2M1200 602l36 4"/>
                </g>
                <path stroke="#008000" d="M577 721l8 3 4 9-4 8-8 4-8-4-4-8 4-9z"/>
                <text class="axis-label" x="557" y="739">D-11</text>
                <path stroke="#00f" stroke-width="4" d="M609 932v-17"/>
                <path fill="#00f" d="M604 918l5-12 5 12z"/>
                <path stroke="#0f0" stroke-width="4" d="M613 935h15"/>
                <path fill="#0f0" d="M627 930l12 5-12 5z"/>
                <path fill="#ddd" d="M605 931h8v4h-8z"/>
                <circle cx="609" cy="938" r="5" fill="#e00000"/>
                <text class="coord z" x="604" y="905">Z</text>
                <text class="coord y" x="640" y="940">Y</text>
            </svg>

            <form class="dialog display-dialog">
                <h2>钢筋显示控制面板</h2>
                <fieldset>
                    <label><input type="checkbox" checked>剪力墙水平筋</label>
                    <label><input type="checkbox" checked>剪力墙垂直筋</label>
                    <label><input type="checkbox" checked>下层墙体纵筋的露出长度</label>
                    <label><input type="checkbox" checked>显示其它图元</label>
                    <label><input type="checkbox" checked>显示详细公式</label>
                </fieldset>
            </form>

            <form class="dialog input-dialog">
                <div class="dialog-head">
                    <h2>钢筋输入小助手</h2>
                    <button type="button" class="dialog-close" aria-label="关闭"><svg viewBox="0 0 12 12"><path d="M1 1l10 10M11 1L1 11" stroke="#777"/></svg></button>
                </div>
                <div class="field">
                    <label for="rebar">钢筋信息:</label>
                    <input id="rebar" class="rebar" type="text" value="(1)C14/(1)C16@150+(1)C12@150">
                </div>
                <div class="format">格式：</div>
                <div class="formats">
                    <ul class="rebar">
                        <li class="selected">(2)C12@200</li>
                        <li>(1)C14@200+(1)C12@200</li>
                        <li>(1)C12@200+(1)C10@200+(1)C12@200</li>
                        <li>(2)C14/C12@200</li>
                        <li>(2)C14@200/(2)C12@200</li>
                        <li>(2)C14@200[1500]/(2)C12@200[1500]</li>
                    </ul>
                    <p>(排数)+级别+直径+@+间距，排数没有输入时默认为2。</p>
                </div>
                <div class="dialog-foot">
                    <span>小技巧：双击可直接添加至钢筋信息</span>
                    <button type="button" class="primary">确定</button>
                    <button type="button">取消</button>
                </div>
            </form>
            <div class="mark"></div>
        </section>
    </main>

    <footer class="statusbar">
        <span class="s"></span><span class="m on"></span><span class="s"></span><span class="m"></span><span class="m"></span><span class="s"></span><span class="s"></span>
    </footer>
</body>
</html>
```

FILE: styles.css
```css
* {
    box-sizing: border-box;
}

body {
    margin: 0;
    height: 100vh;
    display: flex;
    flex-direction: column;
    overflow: hidden;
    background: #fff;
    color: #333;
    font: 12px/16px "Noto Sans", "Noto Sans CJK SC", sans-serif;
}

button, input, select {
    font: inherit;
    color: inherit;
    border: 0;
    padding: 0;
    background: none;
}

a {
    color: inherit;
    text-decoration: none;
}

ul {
    list-style: none;
    margin: 0;
    padding: 0;
}

svg {
    flex: none;
    width: 16px;
    height: 16px;
}

.icon-lib {
    position: absolute;
    width: 0;
    height: 0;
}

/* icon strokes */
.d { fill: none; stroke: #4f566b; }
.b { fill: none; stroke: #1a73e8; }
.bl { fill: #d5e6fb; stroke: #1a73e8; }
.bw { fill: #fff; stroke: #1a73e8; }
.bf { fill: #1a73e8; }
.d2 { fill: none; stroke: #4f566b; stroke-width: 2; }
.b2 { fill: none; stroke: #1a73e8; stroke-width: 2; }

.arrow {
    flex: none;
    margin-left: 7px;
    border: 3px solid transparent;
    border-top-color: #777;
    border-bottom: 0;
}

.arrow.wide {
    border-width: 4px 4px 0;
    margin-left: 6px;
}

.arrow.near {
    margin-left: 0;
}

/* formulas run a size up */
.rebar {
    font-size: 13px;
}

/* menu bar */
.menubar {
    position: relative;
    flex: none;
    display: flex;
    align-items: flex-end;
    height: 17px;
    border-bottom: 1px solid #eee;
}

.logo {
    width: 9px;
    height: 8px;
    margin: 0 0 8px 8px;
    border-radius: 0 0 5px 5px;
    background: #1890ff;
}

.logo-arrow {
    margin: 0 7px 5px 12px;
    border-left: 4px solid transparent;
    border-bottom: 4px solid #555;
}

.tabs {
    display: flex;
}

.tabs a {
    height: 16px;
    padding: 0 13px;
    line-height: 16px;
}

.tabs .active {
    border-radius: 4px 4px 9px 9px;
    background: #1890ff;
    color: #fff;
}

.tooltip {
    position: absolute;
    top: 0;
    right: 0;
    width: 120px;
    height: 15px;
    overflow: hidden;
    white-space: nowrap;
    border: 1px solid #ddd;
    border-top: 0;
    border-radius: 0 0 3px 3px;
    background: #fff;
    color: #000;
    line-height: 14px;
    text-indent: -2px;
}

/* ribbon */
.ribbon {
    flex: none;
    display: flex;
    height: 99px;
    overflow: hidden;
    border-bottom: 1px solid #d5d5d5;
}

.group {
    flex: none;
    margin: 2px 0 4px;
    padding-left: 8px;
    border-right: 1px solid #ddd;
}

.tools {
    display: flex;
    height: 70px;
    padding-top: 1px;
}

.tools button {
    display: flex;
    align-items: center;
    height: 23px;
    white-space: nowrap;
}

.col svg {
    margin-right: 3px;
}

.tools button:disabled {
    color: #aaa;
}

.tools .big {
    flex-direction: column;
    height: auto;
    justify-content: flex-start;
    padding-top: 3px;
}

.big svg {
    width: 30px;
    height: 30px;
    margin-bottom: 6px;
}

.big .arrow {
    margin: 6px 0 0;
}

.group-name {
    display: flex;
    align-items: center;
    justify-content: center;
    padding: 6px 6px 0 0;
}

.g-select { width: 223px; padding-left: 3px; }
.g-select .tools { gap: 7px; }
.g-select .big { margin-right: 2px; }
.g-drawing { width: 194px; }
.g-drawing .tools { gap: 12px; }
.g-common { width: 276px; }
.g-common .tools { gap: 10px; }
.g-modify { width: 237px; }
.g-modify .tools { gap: 10px; }
.g-draw { width: 67px; }
.g-draw .tools { gap: 9px; }
.g-draw .col { width: 22px; }
.g-identify { width: 234px; }
.g-identify .tools { gap: 10px; padding-left: 2px; }
.g-smart { width: 78px; padding-left: 7px; }
.g-edit { width: 184px; }
.g-edit .tools { gap: 11px; }

/* combo row */
.combos {
    flex: none;
    display: flex;
    gap: 3px;
    height: 26px;
    padding-top: 1px;
    background: #f1f1f1;
}

.combos select {
    appearance: none;
    width: 99px;
    height: 23px;
    padding-left: 4px;
    border: 1px solid #d9d9d9;
    border-radius: 3px;
    background-color: #fff;
    background-image: linear-gradient(45deg, transparent 50%, #555 50%), linear-gradient(-45deg, transparent 50%, #555 50%);
    background-position: right 7px center, right 4px center;
    background-size: 3px 3px;
    background-repeat: no-repeat;
}

.combos select:first-child {
    margin-left: -8px;
}

/* docked panels */
.workspace {
    flex: 1;
    min-height: 0;
    display: flex;
}

.panel {
    display: flex;
    flex-direction: column;
    min-height: 0;
    border: 1px solid #d5d5d5;
}

.grip {
    flex: none;
    display: flex;
    align-items: center;
    justify-content: flex-end;
    height: 11px;
    padding-right: 3px;
    background: #e7e7e7;
    border-bottom: 1px solid #d9d9d9;
}

.close {
    display: flex;
}

.close svg {
    width: 8px;
    height: 8px;
    stroke: #888;
}

.panel-title {
    flex: none;
    height: 22px;
    padding-left: 8px;
    border-bottom: 1px solid #d9d9d9;
    background: #f1f1f1;
    color: #777;
    line-height: 21px;
}

.thumb {
    position: absolute;
    right: 3px;
    width: 8px;
    border-radius: 4px;
    background: #c8c8c8;
}

.nav-panel {
    flex: none;
    width: 204px;
    margin-right: 4px;
    border-left: 0;
}

.nav-title {
    padding-left: 0;
}

.nav-tools {
    flex: none;
    display: flex;
    align-items: center;
    gap: 4px;
    height: 28px;
    padding-right: 1px;
    border-bottom: 1px solid #d9d9d9;
}

.plus {
    width: 10px;
    height: 12px;
    margin-right: auto;
}

.nav-tools button {
    display: flex;
    align-items: center;
    justify-content: center;
    width: 24px;
    height: 22px;
    border-radius: 3px;
    background: #c2d9f1;
}

.nav-body, .list-body, .prop-body {
    position: relative;
    flex: 1;
    min-height: 0;
    overflow: hidden;
}

.nav-body {
    padding-top: 3px;
}

.nav-body .thumb {
    top: 16px;
    height: 648px;
}

.tree a {
    display: flex;
    align-items: center;
    height: 24px;
    line-height: 22px;
}

.tree .closed::before {
    content: "";
    margin: 0 7px 2px 3px;
    border: 4px solid transparent;
    border-left-color: #777;
    border-right: 0;
}

.tree .open::before {
    content: "";
    margin: 0 5px 0 1px;
    border: 4px solid transparent;
    border-top-color: #777;
    border-bottom: 0;
}

.tree ul li {
    padding: 1px 0;
}

.tree ul a {
    height: 22px;
    width: 111px;
    margin-left: 31px;
    padding-left: 3px;
    gap: 6px;
    white-space: nowrap;
}

.tree .tiny {
    width: 10px;
    height: 12px;
    margin-left: 2px;
}

.selected {
    background: #c2d9f1;
}

.tree .selected, .list-body .selected {
    border-radius: 3px;
}

/* middle column */
.middle {
    flex: none;
    display: flex;
    flex-direction: column;
    gap: 4px;
    width: 347px;
}

.list-panel {
    flex: none;
    height: 352px;
}

.panel-tabs {
    flex: none;
    display: flex;
    height: 24px;
    background: #f1f1f1;
    border-bottom: 1px solid #d9d9d9;
}

.panel-tabs button {
    width: 65px;
    border: 1px solid #c9c9c9;
    border-width: 1px 1px 0 0;
    background: #e1e1e1;
    color: #888;
    font-weight: bold;
}

.panel-tabs .active {
    background: #f1f1f1;
    color: #333;
}

.list-tools {
    flex: none;
    display: flex;
    gap: 13px;
    height: 27px;
    padding: 1px 1px 0 3px;
    border-bottom: 1px solid #e2e2e2;
}

.list-tools button {
    display: flex;
    align-items: center;
    gap: 4px;
}

.list-tools .arrow {
    margin-left: 1px;
}

.list-tools .more {
    align-self: center;
    justify-content: center;
    width: 10px;
    height: 20px;
    margin-left: auto;
    border: 1px solid #e2e2e2;
    border-radius: 3px;
}

.more svg {
    width: 8px;
    height: 6px;
}

.search {
    flex: none;
    display: flex;
    align-items: center;
    height: 19px;
    padding: 0 4px 0 2px;
    border-bottom: 1px solid #e2e2e2;
}

.search input {
    flex: 1;
    min-width: 0;
    height: 16px;
    outline: 0;
}

.search input::placeholder {
    color: #999;
}

.list-body {
    padding: 4px 0 0 40px;
}

.list-body li {
    width: 151px;
    height: 22px;
    margin-bottom: 2px;
    padding-left: 3px;
    line-height: 21px;
    white-space: nowrap;
}

.list-body .thumb {
    top: 141px;
    height: 114px;
}

/* property table */
.prop-panel {
    flex: 1;
}

.prop-body {
    padding-right: 16px;
}

.prop-body .thumb {
    top: 14px;
    height: 197px;
}

table {
    width: 100%;
    table-layout: fixed;
    border-collapse: separate;
    border-spacing: 0;
}

th, td {
    height: 21px;
    padding: 2px 0 0 3px;
    border-right: 1px solid #dadada;
    border-bottom: 1px solid #dadada;
    line-height: 18px;
    white-space: nowrap;
    overflow: hidden;
}

th {
    padding: 2px 0 0;
    font-weight: normal;
}

.no {
    width: 22px;
}

.name {
    width: 101px;
}

th.value {
    border-color: #6aa7e6;
    background: #80b9f9;
    color: #fff;
    font-weight: bold;
}

td:first-child {
    padding: 2px 0 0;
    background: #f1f1f1;
    border-color: #c4c4c4;
    text-align: center;
}

.link {
    color: #1658ff;
}

.editing td:first-child {
    background: #80b9f9;
    color: #fff;
    font-weight: bold;
}

.editing td:last-child {
    padding: 0;
    border: 0;
}

.edit {
    display: flex;
    align-items: center;
    height: 21px;
    padding: 0 2px;
    border: 2px solid #65a5e8;
}

.edit input {
    flex: 1;
    min-width: 0;
    height: 17px;
    outline: 0;
}

.edit button {
    width: 16px;
    height: 13px;
    border: 1px solid #1a73e8;
    border-radius: 3px;
    background: #e3effc;
    color: #1a73e8;
    font-weight: bold;
    line-height: 9px;
}

.fold {
    width: 13px;
    height: 13px;
    margin-right: 5px;
    border: 1px solid #888;
    border-radius: 2px;
    line-height: 9px;
}

td.child {
    padding-left: 31px;
    background: linear-gradient(#ccc, #ccc) no-repeat 8px 10px / 17px 1px;
}

.splitter {
    flex: none;
    width: 4px;
    padding-top: 372px;
}

.splitter button {
    display: block;
    width: 4px;
    height: 100px;
    background: #5a6778;
}

/* 3d view */
.viewport {
    position: relative;
    flex: 1;
    min-width: 0;
    overflow: hidden;
    background: #000;
}

.scene {
    display: block;
    width: 100%;
    height: 100%;
}

.axis-label {
    fill: #fff;
    font: 19px "Liberation Serif", serif;
}

.coord {
    font: 16px "Liberation Sans", sans-serif;
}

.z { fill: #00f; }
.y { fill: #0f0; }

.dialog {
    position: absolute;
    border: 1px solid #bdbdbd;
    background: #e4e4e4;
}

.dialog h2 {
    margin: 0;
    font-size: 14px;
    font-weight: normal;
    line-height: 20px;
}

.display-dialog {
    top: 2px;
    left: 2px;
    width: 195px;
    padding: 9px 11px 11px;
}

.display-dialog fieldset {
    margin: 19px 0 0;
    padding: 6px 10px;
    border: 1px solid #ccc;
    border-radius: 3px;
    background: #fff;
}

.display-dialog label {
    display: flex;
    align-items: center;
    height: 23px;
    white-space: nowrap;
}

.display-dialog input {
    width: 14px;
    height: 14px;
    margin: 0 3px 1px 0;
    accent-color: #2b7de1;
}

.input-dialog {
    top: 191px;
    left: 165px;
    width: 454px;
    padding: 9px 11px 11px;
    background: linear-gradient(90deg, #e4e4e4 62%, #f1f0f0 68%, #f1f0f0 71%, #e4e4e4 75%, #e4e4e4 84%, #f1f0f0 89%, #f1f0f0 91%, #e6e6e4 96%);
}

.dialog-head {
    display: flex;
    justify-content: space-between;
}

.dialog-close {
    display: flex;
    align-items: center;
}

.dialog-close svg {
    width: 12px;
    height: 12px;
}

.field {
    display: flex;
    align-items: center;
    margin-top: 10px;
}

.field label {
    width: 60px;
}

.field input {
    flex: 1;
    height: 26px;
    padding: 0 2px;
    border: 1px solid #ccc;
    border-radius: 3px;
    background: #fff;
}

.format {
    margin: 14px 0 6px;
}

.formats {
    display: flex;
    gap: 6px;
    height: 209px;
}

.formats ul {
    flex: 1;
    padding: 1px;
    border: 1px solid #ccc;
    background: #fff;
}

.formats li {
    height: 20px;
    margin-bottom: 2px;
    padding-left: 12px;
    line-height: 21px;
    white-space: nowrap;
}

.formats p {
    width: 166px;
    margin: 0;
    padding: 4px 12px 4px 4px;
    border: 1px solid #ccc;
    background: #ffffcb;
    color: #111;
    line-height: 17px;
}

.dialog-foot {
    display: flex;
    align-items: center;
    gap: 6px;
    margin-top: 6px;
}

.dialog-foot span {
    flex: 1;
}

.dialog-foot button {
    width: 80px;
    height: 26px;
    border: 1px solid #ccc;
    border-radius: 3px;
    background: #fff;
}

.dialog-foot .primary {
    border-color: #2b7de1;
    background: #2b7de1;
    color: #fff;
}

.mark {
    position: absolute;
    top: 199px;
    left: 213px;
    width: 299px;
    height: 86px;
    border: 3px solid #ff2213;
    border-radius: 3px;
    pointer-events: none;
}

/* status bar */
.statusbar {
    flex: none;
    display: flex;
    gap: 7px;
    height: 4px;
    padding: 3px 0 0 678px;
    overflow: hidden;
    background: #fbfbfb;
}

.statusbar span {
    height: 16px;
    background: #999;
}

.statusbar .s { width: 22px; }
.statusbar .m { width: 33px; }
.statusbar .on { background: #2b7de1; }
```
